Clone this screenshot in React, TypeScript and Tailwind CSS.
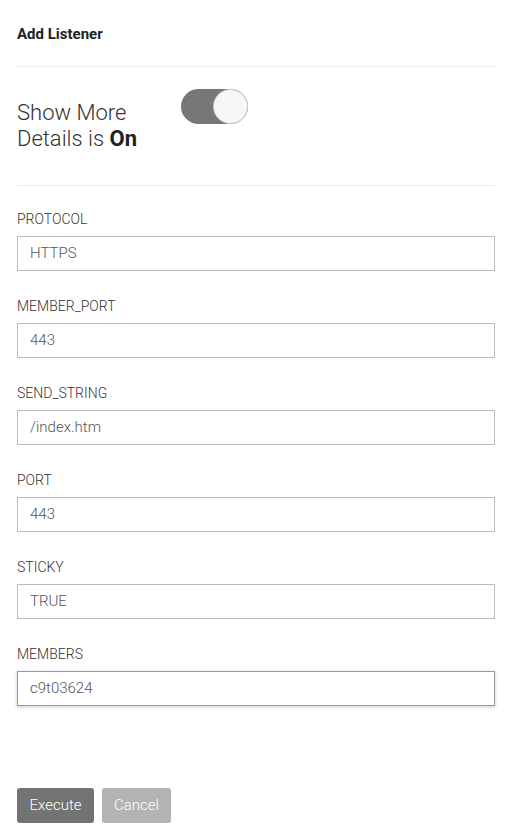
const fields = [
  { label: 'PROTOCOL', value: 'HTTPS' },
  { label: 'MEMBER_PORT', value: '443' },
  { label: 'SEND_STRING', value: '/index.htm' },
  { label: 'PORT', value: '443' },
  { label: 'STICKY', value: 'TRUE' },
  { label: 'MEMBERS', value: 'c9t03624', focused: true },
];

export default function App() {
  return (
    <div className="min-h-[838px] w-[524px] bg-white pl-[17px] pr-[29px] text-[#333] font-['Roboto',sans-serif]">
      <div className="pt-[24px]">
        <h1 className="text-[15px] leading-[20px] font-bold text-[#222]">Add Listener</h1>
      </div>
      <div className="mt-[22px] border-t border-[#ebebeb]" />

      <div className="flex items-start pt-[22px] pb-[33px]">
        <div className="w-[164px] mt-[11px] text-[22px] leading-[26px] font-light text-[#333]">
          Show More
          <br />
          Details is <span className="font-bold text-[#222]">On</span>
        </div>
        <div className="relative h-[35px] w-[67px] rounded-full bg-[#777]">
          <div className="absolute right-0 top-0 h-[35px] w-[35px] rounded-full border border-[#ccc] bg-[#f7f7f7]" />
        </div>
      </div>
      <div className="border-t border-[#ebebeb]" />

      <div className="flex flex-col pt-[23px] gap-[25px]">
        {fields.map((f) => (
          <div key={f.label} className="flex flex-col gap-[7px]">
            <label className="text-[14px] leading-[20px] font-light text-[#333]">{f.label}</label>
            <div
              className={
                f.focused
                  ? 'h-[35px] border border-[#999] px-[12px] flex items-center shadow-[0_1px_4px_rgba(0,0,0,0.2)]'
                  : 'h-[35px] border border-[#bbb] px-[12px] flex items-center'
              }
            >
              <span className="text-[15px] font-light text-[#555]">{f.value}</span>
            </div>
          </div>
        ))}
      </div>

      <div className="flex gap-[8px] mt-[82px]">
        <button className="h-[35px] w-[77px] rounded-[3px] bg-[#737373] text-[15px] font-light text-white">
          Execute
        </button>
        <button className="h-[35px] w-[69px] rounded-[3px] bg-[#b3b3b3] text-[15px] font-light text-white">
          Cancel
        </button>
      </div>
    </div>
  );
}
